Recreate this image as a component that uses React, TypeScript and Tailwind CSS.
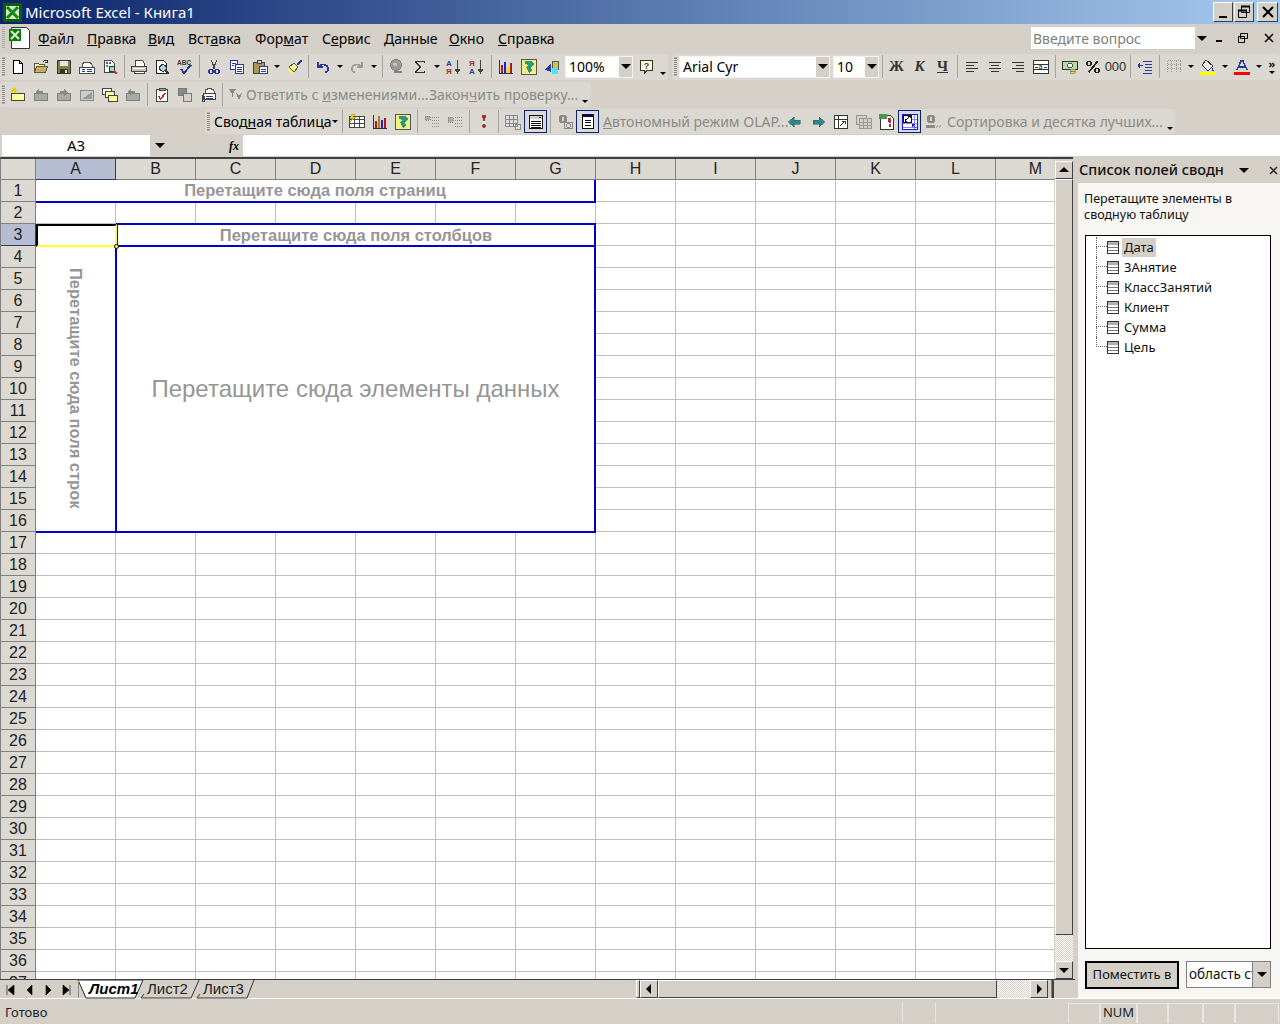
import type { ReactNode } from "react";

const UI = "font-['Noto_Sans','Open_Sans',sans-serif]";
const raised =
  "border border-t-white border-l-white border-r-[#404040] border-b-[#404040] bg-[#d4d0c8]";

const icons: Record<string, ReactNode> = {
  new: <path d="M3.5 1.5h6l3 3v10h-9zM9.5 1.5v3h3" fill="#fff" stroke="#000" />,
  open: (
    <>
      <path d="M1.5 13.5v-9h4l1 1h5v2" fill="#ffef9c" stroke="#555" />
      <path d="M1.5 13.5l2-6h11l-2 6z" fill="#c8b050" stroke="#555" />
      <path d="M10 3c1-2 3-2 4-1M14 1v2h-2" fill="none" stroke="#333" />
    </>
  ),
  save: (
    <>
      <path d="M1.5 1.5h13v13h-13z" fill="#808040" stroke="#333" />
      <path d="M4 2h8v5H4z" fill="#e8e8d8" />
      <path d="M4 10h8v4H4z" fill="#333" />
      <path d="M9 11h2v3H9z" fill="#ddd" />
    </>
  ),
  mail: (
    <>
      <path d="M3 6c1-4 9-4 10 0v3H3z" fill="#fff" stroke="#555" />
      <path d="M.5 8.5h15v6H.5z" fill="#fff" stroke="#444" />
      <path d="M3 10.5h3M3 12.5h3M8 10.5h5M8 12.5h5" stroke="#223a88" />
    </>
  ),
  search: (
    <>
      <path d="M2.5 1.5h7l3 3v9h-10z" fill="#fff" stroke="#444" />
      <path d="M4 3h2v2H4z" fill="#c33" />
      <path d="M7 3h2v2H7z" fill="#36c" />
      <path d="M4 6h2v2H4z" fill="#3a3" />
      <circle cx="10" cy="10" r="3" fill="#8fdcdc" stroke="#333" />
      <path d="M12 12l3 3" stroke="#c03030" strokeWidth="2" />
    </>
  ),
  print: (
    <>
      <path d="M4.5 1.5h7l2 3v3h-9z" fill="#fff" stroke="#444" />
      <path d="M.5 7.5h15v5H.5z" fill="#c8c4bc" stroke="#444" />
      <path d="M3 12.5h10v2H3z" fill="#fff" stroke="#444" />
      <path d="M2 9h12" stroke="#fff" />
    </>
  ),
  preview: (
    <>
      <path d="M2.5 1.5h7l3 3v10h-10z" fill="#fff" stroke="#222" />
      <circle cx="9" cy="9" r="3.2" fill="#a8d8e8" stroke="#333" />
      <path d="M11 11l4 4" stroke="#333" strokeWidth="2" />
    </>
  ),
  spell: (
    <>
      <text x="0" y="6" fontSize="6.5" fontWeight="700" fill="#333" fontFamily="Liberation Sans">
        ABC
      </text>
      <path d="M4 10l3 4 7-8" fill="none" stroke="#2a3a9a" strokeWidth="2" />
    </>
  ),
  cut: (
    <>
      <path d="M5 1l4 9M11 1L7 10" stroke="#444" fill="none" />
      <circle cx="5" cy="12.5" r="2" fill="none" stroke="#2a3a9a" strokeWidth="1.4" />
      <circle cx="11" cy="12.5" r="2" fill="none" stroke="#2a3a9a" strokeWidth="1.4" />
    </>
  ),
  copy: (
    <>
      <path d="M1.5 1.5h7v9h-7z" fill="#fff" stroke="#2a3a9a" />
      <path d="M6.5 5.5h8v9h-8z" fill="#fff" stroke="#2a3a9a" />
      <path d="M8 8h5M8 10h5M8 12h5M3 4h4M3 6h2" stroke="#2a3a9a" />
    </>
  ),
  paste: (
    <>
      <path d="M1.5 3.5h11v11h-11z" fill="#a89850" stroke="#444" />
      <path d="M5 1.5h4v3H5z" fill="#ccc" stroke="#444" />
      <path d="M7.5 7.5h8v7h-8z" fill="#fff" stroke="#2a3a9a" />
      <path d="M9 10h5M9 12h5" stroke="#2a3a9a" />
    </>
  ),
  brush: (
    <>
      <path d="M15 1l-5 4 2 2 4-5z" fill="#2a3a9a" />
      <path d="M3 8l5-4 4 4-4 5z" fill="#f8f0a0" stroke="#555" />
      <path d="M1 11l2-1 4 4-1 1z" fill="#fff060" />
    </>
  ),
  undo: <path d="M3 3v5h5M3 8c3-4 10-3 10 2 0 2-1 3-3 3" fill="none" stroke="#2a3a9a" strokeWidth="1.6" />,
  redo: <path d="M13 3v5H8M13 8c-3-4-10-3-10 2 0 2 1 3 3 3" fill="none" stroke="#9a9a96" strokeWidth="1.6" />,
  link: (
    <>
      <circle cx="7" cy="6" r="5.5" fill="#9a9a96" stroke="#808080" />
      <path d="M4 4h4v3H5z" fill="#c8c4bc" />
      <path d="M4.5 13h4M9 13h4" stroke="#808080" strokeWidth="2.4" />
    </>
  ),
  sigma: <path d="M12.5 4V2.5h-9L8 8l-4.500 5.500h9V12" fill="none" stroke="#333" strokeWidth="1.5" />,
  az: (
    <>
      <text x="0" y="7" fontSize="8" fontWeight="700" fill="#2a3a9a" fontFamily="Liberation Sans">
        А
      </text>
      <text x="0" y="15" fontSize="8" fontWeight="700" fill="#a03030" fontFamily="Liberation Sans">
        Я
      </text>
      <path d="M11.500 1v12M9 10l2.500 4 2.500-4z" stroke="#444" fill="#444" />
    </>
  ),
  za: (
    <>
      <text x="0" y="7" fontSize="8" fontWeight="700" fill="#a03030" fontFamily="Liberation Sans">
        Я
      </text>
      <text x="0" y="15" fontSize="8" fontWeight="700" fill="#2a3a9a" fontFamily="Liberation Sans">
        А
      </text>
      <path d="M11.500 1v12M9 10l2.500 4 2.500-4z" stroke="#444" fill="#444" />
    </>
  ),
  chart: (
    <>
      <path d="M1 1v13h14" fill="none" stroke="#333" />
      <path d="M3 6h2v8H3z" fill="#b01818" />
      <path d="M6 3h2v11H6z" fill="#2020c0" />
      <path d="M9 8h2v6H9z" fill="#f0d800" />
      <path d="M12 4h2v10h-2z" fill="#b01818" />
    </>
  ),
  map: (
    <>
      <path d="M.5.500h15v15H.5z" fill="#f0f088" stroke="#555" />
      <path d="M4 2h7l2 3-3 3 1 4-3 2-3-6 2-2-3-1z" fill="#2e9a7a" />
    </>
  ),
  draw: (
    <>
      <path d="M8 2h6v8H8z" fill="#d8c040" stroke="#555" />
      <path d="M1 11l6-7v9z" fill="#2a3a9a" />
      <circle cx="11" cy="12" r="3.500" fill="#50e0f0" />
    </>
  ),
  help: (
    <>
      <path d="M1.500 1.500h12v10H8l-3 3v-3H1.500z" fill="#ffffc8" stroke="#333" />
      <text x="4.500" y="10" fontSize="9.500" fontWeight="700" fill="#2a3a9a" fontFamily="Liberation Sans">
        ?
      </text>
    </>
  ),
  left: <path d="M2 3.500h12M2 6.500h8M2 9.500h12M2 12.500h8" stroke="#333" />,
  center: <path d="M2 3.500h12M4 6.500h8M2 9.500h12M4 12.500h8" stroke="#333" />,
  right: <path d="M2 3.500h12M6 6.500h8M2 9.500h12M6 12.500h8" stroke="#333" />,
  merge: (
    <>
      <path d="M.5 1.500h15v13H.5zM.5 5.500h15M.5 10.500h15" fill="#fff" stroke="#333" />
      <path d="M1 6h14v4H1z" fill="#fff" />
      <path d="M2 8h3M14 8h-3" stroke="#2a3a9a" />
      <text x="5.500" y="10" fontSize="7" fill="#111" fontFamily="Liberation Sans">
        a
      </text>
    </>
  ),
  money: (
    <>
      <path d="M.5 2.500h15v8H.5z" fill="#b8d8a8" stroke="#333" />
      <circle cx="8" cy="6.500" r="2.500" fill="#fff" stroke="#363" />
      <path d="M8 10h5v2H8zM8 12h5v2H8z" fill="#e8d040" stroke="#665" strokeWidth=".5" />
    </>
  ),
  percent: (
    <>
      <circle cx="4" cy="4.500" r="2.200" fill="none" stroke="#222" strokeWidth="1.500" />
      <circle cx="12" cy="11.500" r="2.200" fill="none" stroke="#222" strokeWidth="1.500" />
      <path d="M12.500 2.500l-9 11" stroke="#222" strokeWidth="1.800" />
    </>
  ),
  indent: (
    <path d="M6 2.500h9M8 5.500h7M8 8.500h7M8 11.500h7M6 14.500h9M1 6.500h5M1 6.500l2-2M1 6.500l2 2" stroke="#2a3a9a" fill="none" />
  ),
  borders: <path d="M1.500 1.500h13M1.500 5.500h13M1.500 9.500h13M1.500 1.500v12M5.500 1.500v12M10.500 1.500v12M14.500 1.500v12" stroke="#999" strokeDasharray="1 1" />,
  fill: (
    <>
      <path d="M6 1l7 6-5 5-6-6z" fill="#e8e8e8" stroke="#333" />
      <path d="M12 8l2 4h-2z" fill="#2a3a9a" />
      <path d="M0 13h16v3H0z" fill="#ffff00" />
    </>
  ),
  color: (
    <>
      <path d="M3 11l4-9h2l4 9M5 8h6" fill="none" stroke="#2a3a9a" strokeWidth="1.500" />
      <path d="M0 12.500h16v3.500H0z" fill="#ff0000" />
    </>
  ),
  star: (
    <>
      <path d="M1.500 6.500h13v7h-13z" fill="#ffffa0" stroke="#444" />
      <path d="M4 0v6M1 3h6M2 1l4 4M6 1L2 5" stroke="#e8c800" />
    </>
  ),
  grayIn: (
    <>
      <path d="M1.500 6.500h13v7h-13z" fill="#a8a8a4" stroke="#808080" />
      <path d="M2 5l4-3v2h4v3H6v2z" fill="#888" />
    </>
  ),
  grayOut: (
    <>
      <path d="M1.500 6.500h13v7h-13z" fill="#a8a8a4" stroke="#808080" />
      <path d="M12 5L8 2v2H4v3h4v2z" fill="#888" />
    </>
  ),
  corner: (
    <>
      <path d="M1.500 3.500h13v10h-13z" fill="#ccc" stroke="#888" />
      <path d="M3 12L13 5v7z" fill="#999" />
    </>
  ),
  stack: (
    <>
      <path d="M.5 1.500h9v6h-9z" fill="#fff" stroke="#444" />
      <path d="M3.500 4.500h9v6h-9z" fill="#ffffa0" stroke="#444" />
      <path d="M6.500 8.500h9v6h-9z" fill="#ffffa0" stroke="#444" />
    </>
  ),
  check: (
    <>
      <path d="M2.500 2.500h11v12h-11z" fill="#fff" stroke="#444" />
      <path d="M5 1.500h6v2H5z" fill="#aaa" stroke="#444" />
      <path d="M4.500 9l2 3 5-6" fill="none" stroke="#c02020" strokeWidth="1.500" />
    </>
  ),
  boxes: (
    <>
      <path d="M1.500 1.500h8v7h-8z" fill="#888" stroke="#777" />
      <path d="M6.500 6.500h8v8h-8z" fill="#d4d0c8" stroke="#777" />
    </>
  ),
  clipMail: (
    <>
      <path d="M5 4c1-3 8-3 9 0v3H5z" fill="#fff" stroke="#555" />
      <path d="M3.500 6.500h12v6h-12z" fill="#fff" stroke="#444" />
      <path d="M6 9h7M6 11h7" stroke="#223a88" />
      <path d="M2 8v6h2V9" fill="none" stroke="#444" />
    </>
  ),
  accept: (
    <>
      <path d="M1 2h7l-3 5v3H4V7z" fill="#8a8a86" />
      <path d="M8 6l3 3 4-5-4 9z" fill="#8a8a86" />
    </>
  ),
  pivotFmt: (
    <>
      <path d="M.5 2.500h15v11H.5z" fill="#fff" stroke="#444" />
      <path d="M.5 5.500h15M5.500 2.500v11M10.500 2.500v11M.5 9.500h15" stroke="#444" />
      <path d="M1 3h4v2H1z" fill="#e8c800" />
      <path d="M3 0l-2 4h3L1 8l6-5H4l2-3z" fill="#f0d020" stroke="#a08000" strokeWidth=".4" />
    </>
  ),
  pivotChart: (
    <>
      <path d="M1 1v13h14" fill="none" stroke="#333" />
      <path d="M3 7h2v7H3z" fill="#b01818" />
      <path d="M6 2h2v12H6z" fill="#a08030" />
      <path d="M9 6h2v8H9z" fill="#2020c0" />
      <path d="M12 4h2v10h-2z" fill="#b01818" />
    </>
  ),
  hideA: <path d="M1 2h5v4H1zM8 3h7M8 6h7M8 9h7M8 12h7" stroke="#888" fill="#aaa" strokeDasharray="1 1" />,
  hideB: <path d="M1 3h5v5H1zM8 3h7M8 6h7M8 9h7M8 12h7" stroke="#888" fill="#aaa" strokeDasharray="1 1" />,
  bang: (
    <>
      <path d="M6 1h4l-1 6H7z" fill="#a83232" />
      <circle cx="8" cy="8" r="1" fill="#fff" />
      <path d="M7 10h2l1 2-2 3-2-3z" fill="#a83232" />
    </>
  ),
  fields: <path d="M.5 1.500h12v11H.5zM.5 5.500h12M.5 9.500h12M4.500 1.500v11M8.500 1.500v11M10 10h5v5h-5z" fill="#ddd" stroke="#888" />,
  listOn: (
    <>
      <path d="M1.500 1.500h13v13h-13z" fill="#fff" stroke="#111" />
      <path d="M2 2h12v3H2z" fill="#d4d0c8" />
      <path d="M10 3h3l-1.500 1.500z" fill="#111" />
      <path d="M3 7.500h10M3 9.500h10M3 11.500h10M3 13h10" stroke="#111" />
    </>
  ),
  gearDb: (
    <>
      <circle cx="6" cy="5" r="4.500" fill="#8a8a86" />
      <path d="M5 3h2v4H5z" fill="#d4d0c8" />
      <path d="M7.500 8.500h8v6h-8z" fill="none" stroke="#8a8a86" />
      <circle cx="11.500" cy="11.500" r="2" fill="none" stroke="#8a8a86" />
    </>
  ),
  offline: (
    <>
      <path d="M2.500 .500h11v14h-11z" fill="#fff" stroke="#111" />
      <path d="M3 1h10v2H3z" fill="#000080" />
      <path d="M5 6h6M5 8.500h6M5 11h6" stroke="#111" />
    </>
  ),
  back: <path d="M1 8l6-5v3h6v4H7v3z" fill="#2e8a8a" stroke="#1a5a5a" strokeWidth=".5" />,
  forward: <path d="M15 8L9 3v3H3v4h6v3z" fill="#2e8a8a" stroke="#1a5a5a" strokeWidth=".5" />,
  refreshBox: (
    <>
      <path d="M1.500 1.500h13v13h-13z" fill="#fff" stroke="#333" />
      <path d="M1.500 5.500h13M5.500 1.500v13" stroke="#333" />
      <path d="M7 12l5-5M9 7h3v3" stroke="#333" fill="none" />
    </>
  ),
  pages: (
    <>
      <path d="M.5 1.500h10v9H.5z" fill="#d4d0c8" stroke="#999" />
      <path d="M3.500 4.500h12v10h-12zM3.500 8.500h12M3.500 11.500h12M7.500 4.500v10M11.500 4.500v10" fill="#d4d0c8" stroke="#999" />
    </>
  ),
  excelBang: (
    <>
      <path d="M1.500 1.500h10l3 3v11h-13z" fill="#fff" stroke="#333" />
      <path d="M0 0h8v5H0z" fill="#4a9a4a" />
      <path d="M9 4h3v4l-1 1h-1L9 8zM9.500 10h2v3h-2z" fill="#a83232" />
    </>
  ),
  fieldOn: (
    <>
      <path d="M.5 .500h15v15H.5z" fill="#fff" stroke="#1818e0" />
      <path d="M1 5.500h14M1 9.500h14M1 13.500h14M12 1v14" stroke="#8888f0" />
      <path d="M1.500 1.500h8v7h-8z" fill="#fff" stroke="#111" />
      <path d="M3 7l5-5M6 2h2v2M3 5v2h2" stroke="#111" fill="none" />
      <path d="M10 10l4 4M10 10v3M10 10h3" stroke="#1818e0" fill="none" />
    </>
  ),
  progress: (
    <>
      <circle cx="6" cy="5" r="4.500" fill="#8a8a86" />
      <path d="M5 3h2v4H5z" fill="#d4d0c8" />
      <path d="M1 11h9v3H1z" fill="#8a8a86" />
      <path d="M11 14l2-3M14 14l2-3" stroke="#aaa" />
    </>
  ),
};

function Ico({ name }: { name: string }) {
  return (
    <svg className="block h-4 w-4" shapeRendering="crispEdges" viewBox="0 0 16 16">
      {icons[name]}
    </svg>
  );
}

function B({ i, on }: { i: string; on?: boolean }) {
  return (
    <div
      className={`flex h-[23px] w-[23px] shrink-0 items-center justify-center ${
        on ? "border border-[#0a246a] bg-[#d8d8de]" : ""
      }`}
    >
      <Ico name={i} />
    </div>
  );
}

function Sep() {
  return (
    <div className="flex h-[23px] w-[6px] shrink-0 justify-center">
      <div className="h-full w-px bg-[#a6a49e]" />
    </div>
  );
}

function Dd() {
  return (
    <div className="flex w-[11px] shrink-0 items-center justify-center">
      <div className="h-0 w-0 border-x-[3px] border-t-[3px] border-x-transparent border-t-black" />
    </div>
  );
}

function Grip() {
  return <div className="mx-[1px] ml-[2px] h-[19px] w-[3px] shrink-0 border-y border-[#aaa] bg-[repeating-linear-gradient(#8f8d88_0_1px,transparent_1px_2px)]" />;
}

function Arrow({ className = "border-t-black" }: { className?: string }) {
  return <div className={`h-0 w-0 border-x-[5px] border-t-[5px] border-x-transparent ${className}`} />;
}

function Combo({ w, text, btn = true }: { w: string; text: string; btn?: boolean }) {
  return (
    <div className={`flex h-[22px] shrink-0 items-center border border-[#f4f3f0] bg-white ${w}`}>
      <span className={`flex-1 whitespace-nowrap pl-[3px] text-[14px] text-black ${UI}`}>{text}</span>
      {btn && (
        <div className="flex h-full w-[13px] items-center justify-center bg-[#d4d0c8]">
          <Arrow className="border-t-black" />
        </div>
      )}
    </div>
  );
}

function Bar({ className, children }: { className: string; children: ReactNode }) {
  return <div className={`flex items-center rounded-[3px] bg-[#dbd8d1] ${className}`}>{children}</div>;
}

const menu = [
  { w: "w-[49px]", a: "", u: "Ф", b: "айл" },
  { w: "w-[61px]", a: "", u: "П", b: "равка" },
  { w: "w-[40px]", a: "", u: "В", b: "ид" },
  { w: "w-[67px]", a: "Вст", u: "а", b: "вка" },
  { w: "w-[67px]", a: "Фор", u: "м", b: "ат" },
  { w: "w-[62px]", a: "С", u: "е", b: "рвис" },
  { w: "w-[65px]", a: "", u: "Д", b: "анные" },
  { w: "w-[49px]", a: "", u: "О", b: "кно" },
  { w: "w-[60px]", a: "", u: "С", b: "правка" },
];

function TitleBar() {
  return (
    <div className="flex h-6 items-center bg-[linear-gradient(90deg,#0a246a,#a6caf0)] pl-[3px] pr-[2px]">
      <svg className="h-[19px] w-[19px] shrink-0" viewBox="0 0 19 19">
        <rect width="19" height="19" fill="#0b5d0b" />
        <rect x="3" y="3" width="13" height="13" fill="#d8e8d0" />
        <path d="M4 4l11 11M15 4L4 15" stroke="#118a11" strokeWidth="3" />
      </svg>
      <span className={`ml-[3px] flex-1 whitespace-nowrap text-[15px] text-white ${UI}`}>Microsoft Excel - Книга1</span>
      <div className={`flex h-[20px] w-[20px] items-end justify-center pb-[3px] ${raised}`}>
        <div className="h-[2px] w-[8px] bg-black" />
      </div>
      <div className={`ml-[1px] flex h-[20px] w-[20px] items-center justify-center ${raised}`}>
        <svg className="h-[14px] w-[14px]" viewBox="0 0 14 14">
          <path d="M4.500 1.500h8v6h-8zM1.500 5.500h8v7h-8z" fill="#d4d0c8" stroke="#000" />
          <path d="M4 1.500h9M1 5.500h9" stroke="#000" strokeWidth="2" />
        </svg>
      </div>
      <div className={`ml-[3px] flex h-[20px] w-[21px] items-center justify-center ${raised}`}>
        <svg className="h-[14px] w-[14px]" viewBox="0 0 14 14">
          <path d="M2 2l10 10M12 2L2 12" stroke="#000" strokeWidth="2" />
        </svg>
      </div>
    </div>
  );
}

function MenuBar() {
  return (
    <div className="flex h-[28px] items-center">
      <div className="ml-[2px] mr-[2px] h-[22px] w-[3px] bg-[repeating-linear-gradient(#aaa8a2_0_1px,transparent_1px_2px)]" />
      <svg className="h-[24px] w-[24px] shrink-0" viewBox="0 0 24 24">
        <path d="M4.500 1.500h15l3 3v18h-18z" fill="#fff" stroke="#333" />
        <rect x="2" y="3" width="12" height="12" fill="#0b7a0b" />
        <path d="M4 5l8 8M12 5l-8 8" stroke="#d8f0d0" strokeWidth="2" />
      </svg>
      <div className={`ml-[7px] flex text-[14px] text-black ${UI}`}>
        {menu.map((m) => (
          <span key={m.u + m.b} className={`${m.w} whitespace-nowrap`}>
            {m.a}
            <span className="underline">{m.u}</span>
            {m.b}
          </span>
        ))}
      </div>
      <div className="flex-1" />
      <div className="flex h-[22px] w-[178px] items-center bg-white">
        <span className={`flex-1 pl-[2px] text-[14px] text-[#808080] ${UI}`}>Введите вопрос</span>
        <div className="flex h-full w-[14px] items-center justify-center bg-[#d4d0c8]">
          <Arrow />
        </div>
      </div>
      <div className="ml-[6px] mr-[3px] flex w-[62px] items-center justify-between pl-[1px] pr-[3px]">
        <div className="mt-[6px] h-[2px] w-[6px] bg-black" />
        <svg className="h-[10px] w-[10px]" viewBox="0 0 10 10">
          <path d="M2.500 .500h7v5h-7zM.5 3.500h6v6h-6z" fill="#d4d0c8" stroke="#000" />
        </svg>
        <svg className="h-[10px] w-[10px]" viewBox="0 0 10 10">
          <path d="M1 1l8 8M9 1L1 9" stroke="#000" strokeWidth="1.500" />
        </svg>
      </div>
    </div>
  );
}

function ToolbarOne() {
  return (
    <div className="flex h-[29px] items-center">
      <Bar className="h-[26px] w-[668px]">
        <Grip />
        {["new", "open", "save", "mail", "search"].map((n) => (
          <B key={n} i={n} />
        ))}
        <Sep />
        {["print", "preview", "spell"].map((n) => (
          <B key={n} i={n} />
        ))}
        <Sep />
        <B i="cut" />
        <B i="copy" />
        <B i="paste" />
        <Dd />
        <B i="brush" />
        <Sep />
        <B i="undo" />
        <Dd />
        <B i="redo" />
        <Dd />
        <Sep />
        <B i="link" />
        <B i="sigma" />
        <Dd />
        <B i="az" />
        <B i="za" />
        <Sep />
        <B i="chart" />
        <B i="map" />
        <B i="draw" />
        <div className="w-[2px]" />
        <Combo w="w-[68px]" text="100%" />
        <div className="w-[2px]" />
        <B i="help" />
        <div className="flex h-full w-[10px] items-end justify-center pb-[5px]">
          <div className="h-0 w-0 border-x-[3px] border-t-[3px] border-x-transparent border-t-black" />
        </div>
      </Bar>
      <Bar className="ml-[4px] h-[26px] w-[608px]">
        <Grip />
        <div className="w-[1px]" />
        <Combo w="w-[151px]" text="Arial Cyr" />
        <div className="w-[3px]" />
        <Combo w="w-[46px]" text="10" />
        <Sep />
        {[
          ["Ж", "font-bold"],
          ["К", "font-bold italic"],
          ["Ч", "font-bold underline"],
        ].map(([t, c]) => (
          <div key={t} className={`flex w-[23px] justify-center font-['Liberation_Serif',serif] text-[15px] text-[#333] ${c}`}>
            {t}
          </div>
        ))}
        <Sep />
        <B i="left" />
        <B i="center" />
        <B i="right" />
        <B i="merge" />
        <Sep />
        <B i="money" />
        <B i="percent" />
        <div className="flex w-[23px] justify-center font-['Liberation_Sans',sans-serif] text-[13px] text-[#333]">000</div>
        <Sep />
        <B i="indent" />
        <Sep />
        <B i="borders" />
        <Dd />
        <B i="fill" />
        <Dd />
        <B i="color" />
        <Dd />
        <div className="flex h-full flex-1 flex-col items-center justify-center text-[#111]">
          <span className="h-[12px] text-[11px] font-bold leading-[10px]">»</span>
          <div className="h-0 w-0 border-x-[3px] border-t-[3px] border-x-transparent border-t-black" />
        </div>
      </Bar>
    </div>
  );
}

function ToolbarTwo() {
  return (
    <div className="flex h-[27px] items-center">
      <Bar className={`h-[25px] w-[591px] text-[14px] text-[#8a8a86] ${UI}`}>
        <Grip />
        {["star", "grayIn", "grayOut", "corner", "stack", "grayIn"].map((n, k) => (
          <B key={k} i={n} />
        ))}
        <Sep />
        <B i="check" />
        <B i="boxes" />
        <B i="clipMail" />
        <Sep />
        <div className="ml-[3px] w-[18px]">
          <Ico name="accept" />
        </div>
        <span className="w-[183px] whitespace-nowrap">
          Ответить с <span className="underline">и</span>зменениями...
        </span>
        <span className="w-[150px] whitespace-nowrap">
          Закон<span className="underline">ч</span>ить проверку...
        </span>
        <div className="flex h-full w-[11px] items-end justify-center pb-[4px]">
          <div className="h-0 w-0 border-x-[3px] border-t-[3px] border-x-transparent border-t-black" />
        </div>
      </Bar>
    </div>
  );
}

function ToolbarThree() {
  return (
    <div className="flex h-[27px] items-center pl-[205px]">
      <Bar className={`h-[25px] w-[970px] text-[14px] text-[#8a8a86] ${UI}`}>
        <Grip />
        <span className="ml-[3px] w-[118px] whitespace-nowrap text-black">
          Свод<span className="underline">н</span>ая таблица
        </span>
        <div className="h-0 w-0 border-x-[3px] border-t-[3px] border-x-transparent border-t-black" />
        <div className="w-[1px]" />
        <Sep />
        <B i="pivotFmt" />
        <B i="pivotChart" />
        <B i="map" />
        <Sep />
        <B i="hideA" />
        <B i="hideB" />
        <Sep />
        <B i="bang" />
        <Sep />
        <B i="fields" />
        <B i="listOn" on />
        <Sep />
        <B i="gearDb" />
        <B i="offline" on />
        <span className="ml-[4px] w-[180px] whitespace-nowrap">
          <span className="underline">А</span>втономный режим OLAP...
        </span>
        <B i="back" />
        <B i="forward" />
        <B i="refreshBox" />
        <B i="pages" />
        <B i="excelBang" />
        <B i="fieldOn" on />
        <B i="progress" />
        <span className="ml-[3px] w-[218px] whitespace-nowrap">Сортировка и десятка лучших...</span>
        <div className="flex h-full flex-1 items-end justify-center pb-[4px]">
          <div className="h-0 w-0 border-x-[3px] border-t-[3px] border-x-transparent border-t-black" />
        </div>
      </Bar>
    </div>
  );
}

function FormulaBar() {
  return (
    <div className="flex h-[21px] items-stretch">
      <div className={`ml-[2px] flex w-[148px] items-center justify-center bg-white text-[15px] text-black ${UI}`}>A3</div>
      <div className="flex w-[20px] items-center justify-center">
        <Arrow />
      </div>
      <div className="flex w-[73px] items-center justify-end pr-[4px] font-['Liberation_Serif',serif] text-[12px] font-bold italic text-black">
        fx
      </div>
      <div className="flex-1 bg-white" />
    </div>
  );
}

const cols = ["A", "B", "C", "D", "E", "F", "G", "H", "I", "J", "K", "L", "M"];
const rows = Array.from({ length: 37 }, (_, i) => i + 1);

function Sheet() {
  return (
    <div className="relative h-[822px] w-[1054px] overflow-hidden border-l border-t-2 border-l-[#808080] border-t-[#404040] bg-white font-['Liberation_Sans',sans-serif]">
      <div className="flex h-[21px] text-[16px] text-[#222]">
        <div className="w-[35px] shrink-0 border-b border-r border-[#808080] bg-[#dcd9d2]" />
        {cols.map((c) => (
          <div
            key={c}
            className={`flex w-[80px] shrink-0 items-center justify-center border-b border-r ${
              c === "A" ? "border-[#33386a] bg-[#b6bdd3]" : "border-[#808080] bg-[#dcd9d2]"
            }`}
          >
            {c}
          </div>
        ))}
      </div>
      {rows.map((r) => (
        <div key={r} className="flex h-[22px]">
          <div
            className={`flex w-[35px] shrink-0 items-center justify-center border-b border-r text-[16px] text-[#222] ${
              r === 3 ? "border-[#33386a] bg-[#b6bdd3]" : "border-[#808080] bg-[#dcd9d2]"
            }`}
          >
            {r}
          </div>
          {cols.map((c) => (
            <div key={c} className="w-[80px] shrink-0 border-b border-r border-[#c0c0c0]" />
          ))}
        </div>
      ))}
      <PivotOverlay />
    </div>
  );
}

// pivot drop areas sit on top of the grid
function PivotOverlay() {
  const zone = "absolute border-[#0000cc] bg-white flex items-center justify-center text-[#969696] whitespace-nowrap";
  return (
    <>
      <div className={`${zone} left-[35px] top-[21px] h-[23px] w-[560px] border-b-2 border-r-2 text-[16.500px] font-bold`}>
        Перетащите сюда поля страниц
      </div>
      <div className={`${zone} left-[115px] top-[64px] h-[24px] w-[480px] border-2 text-[16.500px] font-bold`}>
        Перетащите сюда поля столбцов
      </div>
      <div className={`${zone} left-[35px] top-[87px] h-[287px] w-[80px] border-b-2 text-[16.500px] font-bold`}>
        <span className="[writing-mode:vertical-rl]">Перетащите сюда поля строк</span>
      </div>
      <div className={`${zone} left-[114px] top-[86px] h-[288px] w-[481px] border-x-2 border-b-2 border-t-2 text-[24px]`}>
        Перетащите сюда элементы данных
      </div>
      <div className="absolute left-[35px] top-[65px] h-[23px] w-[81px] border-2 border-b-[#ffff33] border-l-black border-r-[#ffff33] border-t-black bg-white" />
      <div className="absolute left-[113px] top-[85px] h-[5px] w-[5px] rounded-full border border-black bg-[#ffff33]" />
    </>
  );
}

function ScrollBtn({ d }: { d: string }) {
  return (
    <div className={`flex h-[18px] w-[18px] shrink-0 items-center justify-center ${raised}`}>
      <svg className="h-[10px] w-[10px]" viewBox="0 0 10 10">
        <path d={d} fill="#000" />
      </svg>
    </div>
  );
}

const dither =
  "bg-[repeating-conic-gradient(#d4d0c8_0_25%,#ffffff_0_50%)] bg-[length:2px_2px]";

function VScroll() {
  return (
    <div className="flex h-[822px] w-[19px] flex-col border-t-2 border-t-[#404040] pl-px">
      <div className="h-[2px]" />
      <ScrollBtn d="M0 7h10L5 2z" />
      <div className={`h-[756px] w-[18px] ${raised}`} />
      <div className={`flex-1 ${dither}`} />
      <ScrollBtn d="M0 3h10L5 8z" />
    </div>
  );
}

function TabStrip() {
  return (
    <div className="relative w-[636px] shrink-0 border-t border-[#404040] font-['Liberation_Sans',sans-serif]">
      <svg className="absolute inset-0 h-[20px] w-[636px]" viewBox="0 0 636 20">
        <path d="M78 0l8 18h49l8-18z" fill="#fff" stroke="#222" />
        <path d="M141 18h50l8-18M197 18h50l7-18M141 18l3-4M197 18l3-4" fill="none" stroke="#333" />
        <path d="M78.500 0v18" stroke="#888" />
      </svg>
      <div className="relative flex h-[19px] items-center text-[15px] text-[#222]">
        <div className="flex w-[88px] items-center">
          {["M2 0v10M9 0v10L3 5z", "M8 0v10L3 5z", "M3 0v10L8 5z", "M8 0v10M1 0v10l6-5z"].map((d, i) => (
            <svg key={i} className={`h-[10px] w-[10px] ${i === 0 ? "ml-[5px]" : "ml-[9px]"}`} viewBox="0 0 10 10">
              <path d={d} fill="#000" stroke="#000" strokeWidth=".6" />
            </svg>
          ))}
        </div>
        <span className="ml-[1px] w-[58px] font-bold italic text-black">Лист1</span>
        <span className="w-[56px]">Лист2</span>
        <span>Лист3</span>
      </div>
    </div>
  );
}

function HScroll() {
  return (
    <div className="flex flex-1 border-t border-[#404040]">
      <div className={`w-[4px] ${raised}`} />
      <ScrollBtn d="M7 0v10L2 5z" />
      <div className={`h-[18px] w-[339px] ${raised}`} />
      <div className={`h-[18px] w-[33px] ${dither}`} />
      <ScrollBtn d="M3 0v10l5-5z" />
      <div className="ml-[2px] w-[2px] border-r border-[#808080]" />
      <div className="border-l-2 border-[#404040]" />
    </div>
  );
}

const fields = ["Дата", "ЗАнятие", "КлассЗанятий", "Клиент", "Сумма", "Цель"];

function FieldIcon() {
  return (
    <svg className="h-[13px] w-[13px] shrink-0" viewBox="0 0 13 13" shapeRendering="crispEdges">
      <path d="M.5 .500h11v12H.5z" fill="#fff" stroke="#333" />
      <path d="M1 1h10v3H1z" fill="#b4b0a8" />
      <path d="M1 6.500h10M1 9.500h10" stroke="#777" />
    </svg>
  );
}

function FieldPanel() {
  return (
    <div className={`ml-[3px] flex h-[841px] w-[202px] flex-col bg-[#f7f6f3] text-[#111] ${UI}`}>
      <div className="flex h-[26px] shrink-0 items-center bg-[#d4d0c8] pl-px text-[14.500px]">
        <span className="w-[160px] whitespace-nowrap font-medium">Список полей сводн</span>
        <Arrow />
        <svg className="ml-[20px] h-[9px] w-[9px]" viewBox="0 0 9 9">
          <path d="M1 1l7 7M8 1L1 8" stroke="#222" strokeWidth="1.500" />
        </svg>
      </div>
      <p className="ml-[6px] mt-[8px] h-[44px] text-[12.500px] leading-[16px]">
        Перетащите элементы в
        <br />
        сводную таблицу
      </p>
      <div className="ml-[7px] h-[714px] w-[186px] border border-black bg-white pt-[1px] text-[13px]">
        {fields.map((f, i) => (
          <div key={f} className="flex h-[20px] items-center">
            <div className="ml-[10px] flex h-full w-[11px] flex-col">
              <div className="h-[10px] border-b border-l border-dotted border-[#666]" />
              {i < fields.length - 1 && <div className="h-[10px] border-l border-dotted border-[#666]" />}
            </div>
            <FieldIcon />
            <span className={`ml-[2px] h-[19px] px-[2px] leading-[19px] ${i === 0 ? "bg-[#d4d0c8]" : ""}`}>{f}</span>
          </div>
        ))}
      </div>
      <div className="ml-[7px] mt-[12px] flex items-start">
        <div className="flex h-[28px] w-[94px] items-center justify-center border-2 border-black bg-[#d4d0c8] text-[13px]">
          Поместить в
        </div>
        <div className="ml-[7px] flex h-[27px] w-[85px] items-center border border-[#808080] bg-white">
          <span className="w-[65px] overflow-hidden whitespace-nowrap pl-[2px] text-[13.500px]">область ст</span>
          <div className="flex h-full flex-1 items-center justify-center border-l border-[#808080] bg-[#d4d0c8]">
            <Arrow />
          </div>
        </div>
      </div>
    </div>
  );
}

function StatusBar() {
  const slots = ["w-[36px]", "w-[32px]", "w-[37px]", "w-[31px]", "w-[35px]", "w-[32px]", "w-[44px]"];
  return (
    <div className={`flex h-[25px] items-center border-t border-white pt-[3px] text-[13px] text-[#222] ${UI}`}>
      <span className="w-[902px] pl-[5px]">Готово</span>
      <div className="h-[20px] w-[34px] border-x border-[#e8e6e0]" />
      <div className="h-[20px] w-[132px]" />
      {slots.slice(1).map((w, i) => (
        <div key={i} className={`flex h-[20px] ${w} items-center justify-center border-x border-t border-[#e8e6e0]`}>
          {i === 1 ? "NUM" : ""}
        </div>
      ))}
    </div>
  );
}

export default function App() {
  return (
    <div className="flex h-[1024px] w-[1280px] flex-col overflow-hidden bg-[#d4d0c8]">
      <TitleBar />
      <MenuBar />
      <ToolbarOne />
      <ToolbarTwo />
      <ToolbarThree />
      <FormulaBar />
      <div className="mt-px flex">
        <div className="flex h-[841px] w-[1075px] shrink-0 flex-col">
          <div className="flex">
            <Sheet />
            <VScroll />
          </div>
          <div className="flex h-[19px]">
            <TabStrip />
            <HScroll />
          </div>
        </div>
        <FieldPanel />
      </div>
      <StatusBar />
    </div>
  );
}
